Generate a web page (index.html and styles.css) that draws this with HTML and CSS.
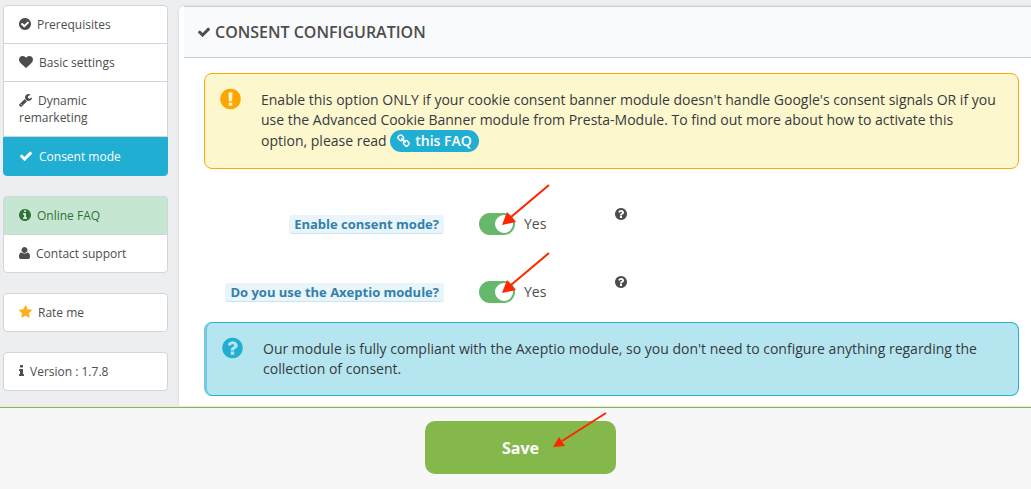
FILE: index.html
```html
<!DOCTYPE html>
<html lang="en">
<head>
    <meta charset="UTF-8">
    <meta name="viewport" content="width=device-width, initial-scale=1.0">
    <title>Consent configuration</title>
    <link rel="stylesheet" href="styles.css">
</head>
<body>
    <!-- Icon set -->
    <svg class="sprite" aria-hidden="true">
        <symbol id="check-circle" viewBox="128 0 1536 1792"><path d="M1412 734q0-28-18-46l-91-90q-19-19-45-19t-45 19l-408 407-226-226q-19-19-45-19t-45 19l-91 90q-18 18-18 46 0 27 18 45l362 362q19 19 45 19 27 0 46-19l543-543q18-18 18-45zm252 162q0 209-103 385.5t-279.5 279.5-385.5 103-385.5-103-279.5-279.5-103-385.5 103-385.5 279.5-279.5 385.5-103 385.5 103 279.5 279.5 103 385.5z"/></symbol>
        <symbol id="heart" viewBox="0 0 1792 1792"><path d="M896 1664q-26 0-44-18l-624-602q-10-8-27.5-26t-55.5-65.5-68-97.5-53.5-121-23.5-138q0-220 127-344t351-124q62 0 126.5 21.5t120 58 95.5 68.5 76 68q36-36 76-68t95.5-68.5 120-58 126.5-21.5q224 0 351 124t127 344q0 221-229 450l-623 600q-18 18-44 18z"/></symbol>
        <symbol id="wrench" viewBox="64 0 1664 1792"><path d="M448 1472q0-26-19-45t-45-19-45 19-19 45 19 45 45 19 45-19 19-45zm644-420l-682 682q-37 37-90 37-52 0-91-37l-106-108q-38-36-38-90 0-53 38-91l681-681q39 98 114.5 173.5t173.5 114.5zm634-435q0 39-23 106-47 134-164.5 217.5t-258.5 83.5q-185 0-316.5-131.5t-131.5-316.5 131.5-316.5 316.5-131.5q58 0 121.5 16.5t107.5 46.5q16 11 16 28t-16 28l-293 169v224l193 107q5-3 79-48.5t135.5-81 70.5-35.5q15 0 23.5 10t8.5 25z"/></symbol>
        <symbol id="check" viewBox="0 0 1792 1792"><path d="M1671 566q0 40-28 68l-724 724-136 136q-28 28-68 28t-68-28l-136-136-362-362q-28-28-28-68t28-68l136-136q28-28 68-28t68 28l294 295 656-657q28-28 68-28t68 28l136 136q28 28 28 68z"/></symbol>
        <symbol id="info-circle" viewBox="128 0 1536 1792"><path d="M1152 1376v-160q0-14-9-23t-23-9h-96v-512q0-14-9-23t-23-9h-320q-14 0-23 9t-9 23v160q0 14 9 23t23 9h96v320h-96q-14 0-23 9t-9 23v160q0 14 9 23t23 9h448q14 0 23-9t9-23zm-128-896v-160q0-14-9-23t-23-9h-192q-14 0-23 9t-9 23v160q0 14 9 23t23 9h192q14 0 23-9t9-23zm640 416q0 209-103 385.5t-279.5 279.5-385.5 103-385.5-103-279.5-279.5-103-385.5 103-385.5 279.5-279.5 385.5-103 385.5 103 279.5 279.5 103 385.5z"/></symbol>
        <symbol id="user" viewBox="192 0 1408 1792"><path d="M1600 1405q0 120-73 189.500t-194 69.500h-874q-121 0-194-69.500t-73-189.500q0-85 8.500-160.500t31.500-152 58.500-131 94-89 134.500-34.500q131 128 377 128t377-128q76 0 134.500 34.500t94 89 58.500 131 31.500 152 8.500 160.500zm-320-893q0 159-112.500 271.500t-271.500 112.500-271.500-112.500-112.500-271.500 112.500-271.500 271.500-112.500 271.500 112.500 112.500 271.500z"/></symbol>
        <symbol id="star" viewBox="64 0 1664 1792"><path d="M1728 647q0 22-26 48l-363 354 86 500q1 7 1 20 0 21-10.5 35.500t-30.500 14.500q-19 0-40-12l-449-236-449 236q-22 12-40 12-21 0-31.500-14.500t-10.500-35.500q0-6 2-20l86-500-364-354q-25-27-25-48 0-37 56-46l502-73 225-455q19-41 49-41t49 41l225 455 502 73q56 9 56 46z"/></symbol>
        <symbol id="info" viewBox="576 0 640 1792"><path d="M1216 1344v128q0 26-19 45t-45 19h-512q-26 0-45-19t-19-45v-128q0-26 19-45t45-19h64v-384h-64q-26 0-45-19t-19-45v-128q0-26 19-45t45-19h384q26 0 45 19t19 45v576h64q26 0 45 19t19 45zm-128-1152v192q0 26-19 45t-45 19h-256q-26 0-45-19t-19-45v-192q0-26 19-45t45-19h256q26 0 45 19t19 45z"/></symbol>
        <symbol id="question-circle" viewBox="128 0 1536 1792"><path d="M1024 1376v-192q0-14-9-23t-23-9h-192q-14 0-23 9t-9 23v192q0 14 9 23t23 9h192q14 0 23-9t9-23zm256-672q0-88-55.500-163t-138.500-116-170-41q-243 0-371 213-15 24 8 42l132 100q7 6 19 6 16 0 25-12 53-68 86-92 34-24 86-24 48 0 85.500 26t37.500 59q0 38-20 61t-68 45q-63 28-115.500 86.500t-52.500 125.500v36q0 14 9 23t23 9h192q14 0 23-9t9-23q0-19 21.500-49.500t54.500-49.500q32-18 49-28.500t46-35 44.500-48 28-60.500 12.500-81zm384 192q0 209-103 385.500t-279.500 279.500-385.500 103-385.500-103-279.500-279.500-103-385.500 103-385.500 279.500-279.500 385.500-103 385.500 103 279.500 279.500 103 385.500z"/></symbol>
        <symbol id="exclamation-circle" viewBox="128 0 1536 1792"><path d="M896 128q209 0 385.500 103t279.500 279.500 103 385.500-103 385.500-279.500 279.500-385.500 103-385.500-103-279.500-279.500-103-385.500 103-385.500 279.500-279.500 385.500-103zm128 1247v-190q0-14-9-23.500t-22-9.500h-192q-13 0-23 10t-10 23v190q0 13 10 23t23 10h192q13 0 22-9.500t9-23.500zm-2-344l18-621q0-12-10-18-10-8-24-8h-220q-14 0-24 8-10 6-10 18l17 621q0 10 10 17.500t24 7.500h185q14 0 23.500-7.500t10.500-17.500z"/></symbol>
        <symbol id="link" viewBox="64 0 1664 1792"><path d="M1520 1216q0-40-28-68l-208-208q-28-28-68-28-42 0-72 32 3 3 19 18.500t21.500 21.500 15 19 13 25.500 3.500 27.500q0 40-28 68t-68 28q-15 0-27.500-3.500t-25.500-13-19-15-21.500-21.500-18.500-19q-33 31-33 73 0 40 28 68l206 207q27 27 68 27 40 0 68-26l147-146q28-28 28-67zm-703-705q0-40-28-68l-206-207q-28-28-68-28-39 0-68 27l-147 146q-28 28-28 67 0 40 28 68l208 208q27 27 68 27 42 0 72-31-3-3-19-18.500t-21.500-21.500-15-19-13-25.500-3.500-27.500q0-40 28-68t68-28q15 0 27.500 3.500t25.500 13 19 15 21.500 21.500 18.500 19q33-31 33-73zm895 705q0 120-85 203l-147 146q-83 83-203 83-121 0-204-85l-206-207q-83-83-83-203 0-123 88-209l-88-88q-86 88-208 88-120 0-204-84l-208-208q-84-84-84-204t85-203l147-146q83-83 203-83 121 0 204 85l206 207q83 83 83 203 0 123-88 209l88 88q86-88 208-88 120 0 204 84l208 208q84 84 84 204z"/></symbol>
        <symbol id="arrow" viewBox="0 0 50 44"><path d="M48 2L10 34" fill="none" stroke="#ff2600" stroke-width="2"/><path d="M1 42L6 29L15 39z" fill="#ff2600"/></symbol>
        <symbol id="arrow-flat" viewBox="0 0 56 38"><path d="M54 2L10 30" fill="none" stroke="#ff2600" stroke-width="2"/><path d="M1 36L7 26L13 35z" fill="#ff2600"/></symbol>
    </svg>

    <div class="page">
        <nav class="sidebar">
            <div class="list-group">
                <a class="list-item" href="#"><svg class="icon w12"><use href="#check-circle"/></svg>Prerequisites</a>
                <a class="list-item" href="#"><svg class="icon w14"><use href="#heart"/></svg>Basic settings</a>
                <a class="list-item" href="#"><svg class="icon w13"><use href="#wrench"/></svg>Dynamic remarketing</a>
                <a class="list-item active" href="#"><svg class="icon w14"><use href="#check"/></svg>Consent mode</a>
            </div>
            <div class="list-group">
                <a class="list-item success" href="#"><svg class="icon w12"><use href="#info-circle"/></svg>Online FAQ</a>
                <a class="list-item" href="#"><svg class="icon w11"><use href="#user"/></svg>Contact support</a>
            </div>
            <div class="list-group">
                <a class="list-item" href="#"><svg class="icon w13 star"><use href="#star"/></svg>Rate me</a>
            </div>
            <div class="list-group">
                <a class="list-item" href="#"><svg class="icon w5"><use href="#info"/></svg>Version : 1.7.8</a>
            </div>
        </nav>

        <main class="panel">
            <h3 class="panel-heading"><svg class="icon w14"><use href="#check"/></svg>Consent configuration</h3>
            <form class="panel-body" id="consentForm">
                <div class="alert alert-warning">
                    <svg class="alert-icon"><use href="#exclamation-circle"/></svg>
                    <p>Enable this option ONLY if your cookie consent banner module doesn't handle Google's consent signals OR if you use the Advanced Cookie Banner module from Presta-Module. To find out more about how to activate this option, please read <a class="badge" href="#"><svg class="icon w13"><use href="#link"/></svg>this FAQ</a></p>
                </div>

                <div class="form-row">
                    <label class="field-label" for="consentMode">Enable consent mode?</label>
                    <div class="switch-wrap">
                        <input type="checkbox" class="switch" id="consentMode" checked>
                        <span>Yes</span>
                        <svg class="arrow"><use href="#arrow"/></svg>
                    </div>
                    <svg class="icon w12 help"><use href="#question-circle"/></svg>
                </div>
                <div class="form-row">
                    <label class="field-label" for="axeptio">Do you use the Axeptio module?</label>
                    <div class="switch-wrap">
                        <input type="checkbox" class="switch" id="axeptio" checked>
                        <span>Yes</span>
                        <svg class="arrow"><use href="#arrow"/></svg>
                    </div>
                    <svg class="icon w12 help"><use href="#question-circle"/></svg>
                </div>

                <div class="alert alert-info">
                    <svg class="alert-icon"><use href="#question-circle"/></svg>
                    <p>Our module is fully compliant with the Axeptio module, so you don't need to configure anything regarding the collection of consent.</p>
                </div>
            </form>
        </main>
    </div>

    <footer class="save-bar">
        <button type="submit" class="save-btn" form="consentForm">Save
            <svg class="arrow-flat"><use href="#arrow-flat"/></svg>
        </button>
    </footer>
</body>
</html>
```

FILE: styles.css
```css
* {
    box-sizing: border-box;
}

body {
    display: flex;
    flex-direction: column;
    height: 100vh;
    margin: 0;
    background-color: #edeef0;
    color: #4d4d4d;
    font-family: "Open Sans", "Noto Sans", sans-serif;
    font-size: 14px;
    line-height: 20px;
}

.sprite {
    display: none;
}

.icon {
    height: 14px;
    fill: currentColor;
}

.w5 { width: 5px; }
.w11 { width: 11px; }
.w12 { width: 12px; }
.w13 { width: 13px; }
.w14 { width: 14px; }

.page {
    display: flex;
    flex: 1;
    gap: 11px;
    min-height: 0;
    padding: 5px 0 0 3px;
    overflow: hidden;
}

/* Sidebar */
.sidebar {
    display: flex;
    flex-direction: column;
    flex: 0 0 165px;
    gap: 20px;
}

.list-item {
    display: block;
    margin-top: -1px;
    padding: 10px 15px;
    background-color: #fff;
    border: 1px solid #d3d5d8;
    color: #4d4d4d;
    font-size: 12px;
    line-height: 17px;
    text-decoration: none;
}

.list-item:first-child {
    margin-top: 0;
    border-top-left-radius: 4px;
    border-top-right-radius: 4px;
}

.list-item:last-child {
    border-bottom-left-radius: 4px;
    border-bottom-right-radius: 4px;
}

.list-item .icon {
    margin-right: 6px;
    vertical-align: -2px;
}

.list-item.active {
    margin-top: 0;
    background-color: #20afd3;
    border-color: #20afd3;
    color: #fff;
}

.list-item.success {
    background-color: #c5e6d1;
    color: #32703a;
}

.list-item .star {
    fill: #fdb01e;
}

/* Main panel */
.panel {
    flex: 1;
    margin-top: 1px;
    padding-left: 5px;
    background-color: #fff;
    border-top-left-radius: 5px;
    box-shadow: 0 0 2px #b4ccd4;
}

.panel-heading {
    display: flex;
    align-items: center;
    gap: 4px;
    margin: 0;
    padding: 15px 13px;
    background-color: #f9fafc;
    border-top: 1px solid #c9d2d3;
    border-bottom: 1px solid #c8cdd1;
    font-size: 16px;
    font-weight: 600;
    text-transform: uppercase;
}

.panel-body {
    padding: 15px 12px 10px 20px;
}

.alert {
    display: flex;
    gap: 20px;
    padding: 16px 20px 16px 15px;
    border: 1px solid;
    border-radius: 8px;
    color: #363a41;
}

.alert p {
    margin: 0;
}

.alert-icon {
    flex: none;
    width: 21px;
    height: 24px;
    margin-top: -3px;
}

.alert-warning {
    margin-bottom: 44px;
    background-color: #fdf7cd;
    border-color: #fba80a;
}

.alert-warning .alert-icon {
    fill: #fea500;
}

.alert-info {
    margin-top: 19px;
    background-color: #b5e6ef;
    border-color: #25b1d3;
    border-left: 3px solid #72c9e0;
}

.alert-info .alert-icon {
    fill: #20afd3;
}

.badge {
    display: inline-block;
    padding: 1px 7px;
    background-color: #20afd3;
    border-radius: 11px;
    color: #fff;
    font-weight: 600;
    text-decoration: none;
}

.badge .icon {
    margin-right: 5px;
    vertical-align: -2px;
}

/* Form */
.form-row {
    display: grid;
    grid-template-columns: 240px 101px auto;
    column-gap: 35px;
    align-items: center;
}

.form-row + .form-row {
    margin-top: 46px;
}

.field-label {
    justify-self: end;
    padding: 0 5px;
    background-color: #e9f5fa;
    border-bottom: 1px solid #c5e6f3;
    border-radius: 3px;
    color: #3280ac;
    font-size: 13px;
    font-weight: 700;
    line-height: 18px;
}

.switch-wrap {
    display: flex;
    align-items: center;
    gap: 9px;
    position: relative;
}

.switch {
    display: flex;
    align-items: center;
    width: 36px;
    height: 22px;
    margin: 0;
    padding: 0 2px;
    appearance: none;
    background-color: #b3b9bd;
    border-radius: 11px;
}

.switch::before {
    content: "";
    width: 18px;
    height: 18px;
    background-color: #fff;
    border-radius: 50%;
}

.switch:checked {
    justify-content: flex-end;
    background-color: #66b86c;
}

.help {
    align-self: start;
    margin-top: -6px;
}

.arrow {
    position: absolute;
    top: -30px;
    left: 22px;
    width: 50px;
    height: 44px;
    pointer-events: none;
}

/* Save bar */
.save-bar {
    z-index: 1;
    padding: 13px 0 15px 10px;
    background-color: #f7f7f7;
    border-top: 1px solid #84b84b;
    box-shadow: 0 -1px 1px #e8e8ec;
    text-align: center;
}

.save-btn {
    display: block;
    position: relative;
    width: 191px;
    height: 53px;
    margin: 0 auto;
    background-color: #84b84b;
    border: none;
    border-radius: 10px;
    color: #fff;
    font-family: inherit;
    font-size: 16px;
    font-weight: 700;
}

.arrow-flat {
    position: absolute;
    top: -10px;
    right: 8px;
    width: 56px;
    height: 38px;
    pointer-events: none;
}
```
